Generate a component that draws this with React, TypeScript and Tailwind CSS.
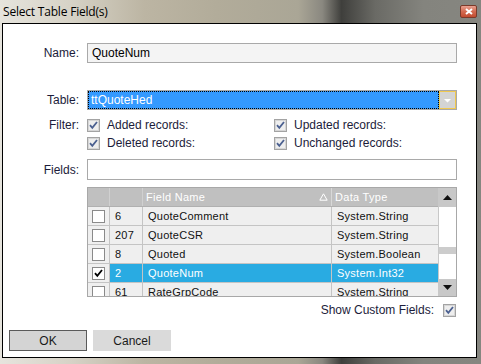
import React from "react";

function FilterCheck() {
  return (
    <svg width="13" height="13" viewBox="0 0 13 13" className="shrink-0">
      <rect x="0.5" y="0.5" width="12" height="12" fill="#e6e6e6" stroke="#a3a3a3" />
      <rect x="1.5" y="1.5" width="10" height="10" fill="#eeeeee" stroke="#d6d6d6" />
      <path d="M3 6.2 L5.3 8.8 L10 3" fill="none" stroke="#4b6090" strokeWidth="1.8" />
    </svg>
  );
}

function GridCheck({ checked }: { checked?: boolean }) {
  return (
    <svg width="13" height="13" viewBox="0 0 13 13" className="shrink-0">
      <rect x="0.5" y="0.5" width="12" height="12" fill="#ffffff" stroke="#8a8a8a" />
      {checked && <path d="M3 6.2 L5.3 8.8 L10 3" fill="none" stroke="#000" strokeWidth="1.8" />}
    </svg>
  );
}

const rows = [
  { n: "6", name: "QuoteComment", type: "System.String" },
  { n: "207", name: "QuoteCSR", type: "System.String" },
  { n: "8", name: "Quoted", type: "System.Boolean" },
  { n: "2", name: "QuoteNum", type: "System.Int32", sel: true },
  { n: "61", name: "RateGrpCode", type: "System.String" },
];

export default function App() {
  return (
    <div className="relative w-[481px] h-[364px] overflow-hidden bg-[linear-gradient(90deg,#e6e4dd_0%,#d6d2c6_15%,#bcb5a3_30%,#b2ac9a_45%,#aaa696_62%,#8a8880_67%,#3f3f3c_71%,#6a6a65_78%,#84847e_88%,#868680_100%)] font-['Liberation_Sans',Arial,sans-serif] text-[12px] text-[#1c1c3a]">
      {/* Title bar */}
      <div className="flex h-[23px] items-center justify-between pl-[3px] pr-[4px]">
        <span className="font-['Open_Sans',sans-serif] text-[12px] text-black tracking-[-0.2px]">Select Table Field(s)</span>
        <div className="mt-[-1px] flex h-[13px] w-[17px] items-center justify-center rounded-[2px] border border-[#7a3a2a] bg-[linear-gradient(180deg,#e8a090_0%,#d46a50_50%,#c24c30_100%)]">
          <svg width="8" height="7" viewBox="0 0 8 7">
            <path d="M1 1 L7 6 M7 1 L1 6" stroke="#fff" strokeWidth="2" />
          </svg>
        </div>
      </div>

      {/* Body */}
      <div className="ml-[2px] flex h-[335px] w-[475px] flex-col border border-black bg-white">
        {/* Name */}
        <div className="mt-[19px] flex items-center">
          <div className="w-[76px] pr-[0px] text-right">Name:</div>
          <div className="ml-[8px] flex h-[20px] w-[370px] items-center border border-[#a9a9a9] bg-[#f4f4f4] pl-[4px] text-black">
            QuoteNum
          </div>
        </div>

        {/* Table */}
        <div className="mt-[27px] flex items-center">
          <div className="w-[76px] text-right">Table:</div>
          <div className="ml-[8px] flex h-[20px] w-[370px] border border-[#a9a9a9] bg-[#3399ff]">
            <div className="flex flex-1 items-center border border-dotted border-black pl-[2px] text-white">
              ttQuoteHed
            </div>
            <div className="flex w-[17px] items-center justify-center border border-[#f0c850] bg-[#d4d4d4]">
              <svg width="7" height="5" viewBox="0 0 7 5">
                <path d="M0 1 H7 L3.5 4.5 Z" fill="#fff" />
              </svg>
            </div>
          </div>
        </div>

        {/* Filter */}
        <div className="mt-[6px] flex">
          <div className="w-[76px] pt-[2px] text-right leading-[14px]">Filter:</div>
          <div className="ml-[8px] grid w-[370px] grid-cols-[187px_183px]">
            <div className="flex h-[18px] items-center gap-[7px]">
              <FilterCheck />
              <span>Added records:</span>
            </div>
            <div className="flex h-[18px] items-center gap-[7px]">
              <FilterCheck />
              <span>Updated records:</span>
            </div>
            <div className="flex h-[18px] items-center gap-[7px]">
              <FilterCheck />
              <span>Deleted records:</span>
            </div>
            <div className="flex h-[18px] items-center gap-[7px]">
              <FilterCheck />
              <span>Unchanged records:</span>
            </div>
          </div>
        </div>

        {/* Fields */}
        <div className="mt-[7px] flex items-center">
          <div className="w-[76px] text-right">Fields:</div>
          <div className="ml-[8px] h-[21px] w-[370px] border border-[#a9a9a9] bg-white" />
        </div>

        {/* Grid */}
        <div className="mt-[7px] ml-[84px] flex h-[110px] w-[370px] border border-[#a8a8a8]">
          <div className="flex w-[350px] flex-col overflow-hidden">
            <div className="grid h-[19px] shrink-0 grid-cols-[22px_33px_189px_106px] border-b border-[#b0b0b0] bg-[#c0c0c0] text-[11px] tracking-[0.3px] text-white">
              <div className="border-r border-[#d0d0d0]" />
              <div className="border-r border-[#d0d0d0]" />
              <div className="flex items-center justify-between border-r border-[#d8d8d8] pl-[3px] pr-[3px]">
                <span>Field Name</span>
                <svg width="9" height="8" viewBox="0 0 9 8">
                  <path d="M4.5 0.8 L8.2 7.2 H0.8 Z" fill="none" stroke="#fff" strokeWidth="1" />
                </svg>
              </div>
              <div className="flex items-center pl-[3px]">Data Type</div>
            </div>
            {rows.map((r) => (
              <div
                key={r.n}
                className={`grid h-[19px] shrink-0 grid-cols-[22px_33px_189px_106px] border-b border-[#c4c4c4] text-[11px] tracking-[0.25px] ${
                  r.sel ? "bg-[#29abe2] text-white" : "bg-[#efefef] text-[#111]"
                }`}
              >
                <div className="flex items-center justify-center border-r border-[#c4c4c4] bg-[#efefef]">
                  <GridCheck checked={r.sel} />
                </div>
                <div className="flex items-center border-r border-[#c4c4c4] pl-[5px]">{r.n}</div>
                <div className="flex items-center border-r border-[#c4c4c4] pl-[5px]">{r.name}</div>
                <div className="flex items-center pl-[5px]">{r.type}</div>
              </div>
            ))}
          </div>
          <div className="flex w-[18px] flex-col border-l border-[#c8c8c8] bg-white">
            <div className="flex h-[19px] items-center justify-center bg-[#c8c8c8]">
              <svg width="9" height="5" viewBox="0 0 9 5">
                <path d="M4.5 0 L9 5 H0 Z" fill="#111" />
              </svg>
            </div>
            <div className="h-[40px]" />
            <div className="h-[7px] bg-[#cccccc]" />
            <div className="flex-1" />
            <div className="flex h-[17px] items-center justify-center bg-[#c8c8c8]">
              <svg width="9" height="5" viewBox="0 0 9 5">
                <path d="M0 0 H9 L4.5 5 Z" fill="#111" />
              </svg>
            </div>
          </div>
        </div>

        {/* Show custom fields */}
        <div className="mt-[6px] flex h-[14px] items-center justify-end gap-[9px] pr-[20px]">
          <span>Show Custom Fields:</span>
          <FilterCheck />
        </div>

        {/* Buttons */}
        <div className="mt-[13px] flex gap-[6px] pl-[6px]">
          <div className="flex h-[21px] w-[78px] items-center justify-center border border-[#5a5a5a] bg-[#d4d4d4] text-[#1a1a1a]">
            OK
          </div>
          <div className="flex h-[21px] w-[78px] items-center justify-center bg-[#dadada] text-[#1a1a1a]">
            Cancel
          </div>
        </div>
      </div>
    </div>
  );
}
